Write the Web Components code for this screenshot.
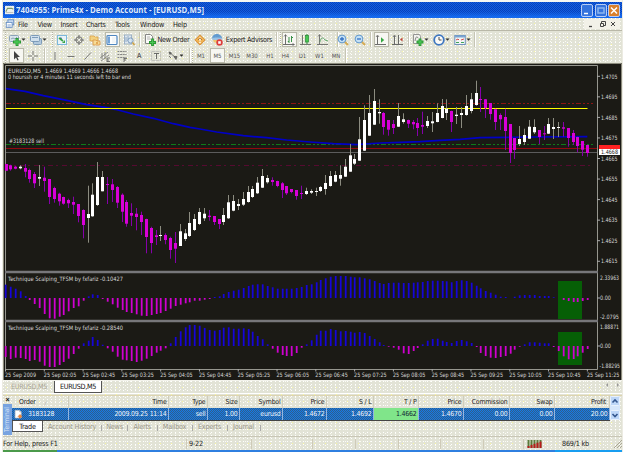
<!DOCTYPE html>
<html lang="en">
<head>
<meta charset="utf-8">
<title>Prime4x</title>
<style>
html,body{margin:0;height:100%;background:#fff}
body{font:7.2px "DejaVu Sans Condensed","DejaVu Sans",sans-serif;font-stretch:condensed;letter-spacing:-.2px;color:#222;overflow:hidden}
</style>
</head>
<body>
<trade-app></trade-app>
<script>
const DITHER = `conic-gradient(at 1px 1px,transparent 75%,#fff 0) 0 0/4px 3px,conic-gradient(at 1px 1px,transparent 75%,#fbfbf4 0) 2px 1px/5px 4px,conic-gradient(at 1px 1px,transparent 75%,#f8f6a0 0) 3px 2px/11px 7px,#e2e3d6`;
const define = (name, render) => customElements.define(name, class extends HTMLElement {
  constructor() { super(); this.attachShadow({mode: 'open'}); }
  connectedCallback() { this.shadowRoot.innerHTML = render(this); }
});

const ICONS = {
  app: '<rect x="0" y="1" width="11" height="10" fill="#eef1ee"/><path d="M1 8 3 4h5l2 1" fill="none" stroke="#7a9a6a" stroke-width="1.3"/><path d="M1 9h9" stroke="#bbb"/>',
  mdi: '<rect x="3.5" y="1" width="7" height="6" fill="#cfe0f5" stroke="#5b86c0"/><rect x="1.5" y="4" width="7" height="6" fill="#fff" stroke="#5b86c0"/><path d="M3 7h4M3 8.500h4" stroke="#5b86c0" stroke-width=".7"/>',
  newchart: '<rect x=".5" y="1.5" width="9" height="6" rx="1" fill="#d6e3ee" stroke="#7b97b3"/><path d="M2 5l2-1 2 1 2-2" fill="none" stroke="#7b97b3"/><path d="M8 4v8M4 8h8" stroke="#0b8a17" stroke-width="3"/><path d="M8 5v6M5 8h6" stroke="#2cc43a" stroke-width="1.3"/>',
  profiles: '<rect x="3.500" y="4.500" width="8" height="6" rx="1" fill="#a9c4de" stroke="#6c8fb5"/><rect x=".5" y="1.500" width="9" height="6" rx="1" fill="#cfe0f0" stroke="#6c8fb5"/><path d="M2 3.500h6" stroke="#6c8fb5"/>',
  market: '<rect x="1.500" y="1.500" width="9" height="9" fill="#e9f4fb" stroke="#6ab0dc"/><path d="M3 5l2-2 1 2z" fill="#23a"/><path d="M3 4l4 3" stroke="#1a9a2a" stroke-width="1.600"/><path d="M6 9l3-3v3z" fill="#1a9a2a"/>',
  cross: '<circle cx="6" cy="6" r="3.200" fill="none" stroke="#555" stroke-width=".9"/><path d="M6 1v4M6 7v4M1 6h4M7 6h4" stroke="#555"/>',
  folder: '<path d="M1 2h4l1 1h3v4H1z" fill="#f5cf72" stroke="#d9962b" stroke-width=".8"/><path d="M4 6h3l1 1h3v4H4z" fill="#f9d98a" stroke="#d9862b" stroke-width=".8"/><path d="M8 8v2" stroke="#c60"/>',
  navigator: '<rect x="1" y="1.500" width="10" height="9" rx="1" fill="#fff" stroke="#3173b8" stroke-width="1.200"/><rect x="2" y="2.500" width="2" height="7" fill="#5b95d6"/><path d="M6 4h4M6 6h3M6 8h4" stroke="#dde6f0" stroke-width=".8"/>',
  tester: '<rect x="1.500" y="1" width="7" height="9" fill="#dfe8f2" stroke="#90a9c4"/><path d="M3 3v5M5 2v5" stroke="#7f9fc4"/><circle cx="7.500" cy="6.500" r="2.600" fill="#cfe3f7" fill-opacity=".8" stroke="#6d90b8"/><path d="M9.500 8.500l2 2.500" stroke="#c9962b" stroke-width="1.500"/>',
  order: '<path d="M1.500.500h5l2 2v7h-7z" fill="#fff" stroke="#777"/><path d="M3 3h3M3 5h4" stroke="#999" stroke-width=".8"/><path d="M8.500 4.500v7.500M5 8.500h7" stroke="#0b8a17" stroke-width="2.800"/><path d="M8.500 5.500v5.500M6 8.500h5" stroke="#30c23e" stroke-width="1.100"/>',
  diamond: '<path d="M6 .8 11.200 6 6 11.200.8 6z" fill="#f2a93b" stroke="#cf7b17" stroke-width=".9"/><path d="M6 3.500v3.200M6 7.800v1.200" stroke="#fff" stroke-width="1.500"/><path d="M4 6l2-2 2 2" fill="none" stroke="#8a4a00" stroke-width=".7"/>',
  expert: '<circle cx="6" cy="5" r="4" fill="#efc25c"/><path d="M1 5C1 1 4 0 6 0s5 2 5 4L6 5z" fill="#4d8fd0"/><ellipse cx="6" cy="4.800" rx="5.500" ry="1.300" fill="#8fbde8"/><circle cx="8.500" cy="8.500" r="3.200" fill="#d22"/><rect x="7.200" y="7.200" width="2.600" height="2.600" fill="#fff"/>',
  bars: '<path d="M2.500 1v9.500M0 10.500h11" stroke="#444" stroke-width=".9"/><path d="M1 2.500 2.500.500 4 2.500M9.500 9.500l2 1-2 1" fill="none" stroke="#444" stroke-width=".7"/><path d="M6 3v6M8.500 2v6M4.800 7.500H6M8.500 3.500H10" stroke="#18802a"/>',
  candle: '<path d="M2.500 1v9.500M0 10.500h11" stroke="#555" stroke-width=".9"/><path d="M7 0v10" stroke="#0a7a1a"/><rect x="5.500" y="1.500" width="3" height="6.500" fill="#2ac43a" stroke="#0a7a1a" stroke-width=".7"/>',
  line: '<path d="M2.500 1v9.500M0 10.500h11" stroke="#555" stroke-width=".9"/><path d="M1 2.500 2.500.500 4 2.500" fill="none" stroke="#555" stroke-width=".7"/><path d="M3 8c1-5 3-5 5-2l3 1" fill="none" stroke="#2d9140" stroke-width=".8"/>',
  zin: '<path d="M7.500 7.500l3.500 3.500" stroke="#d3a13c" stroke-width="2"/><circle cx="5" cy="5" r="3.900" fill="#bfe0fb" stroke="#4b8ac8"/><path d="M5 3v4M3 5h4" stroke="#175ec0" stroke-width="1.300"/>',
  zout: '<path d="M7.500 7.500l3.500 3.500" stroke="#d3a13c" stroke-width="2"/><circle cx="5" cy="5" r="3.900" fill="#bfe0fb" stroke="#4b8ac8"/><path d="M3 5h4" stroke="#175ec0" stroke-width="1.300"/>',
  scroll: '<path d="M2.500 2v8.500M0 10.500h11" stroke="#555"/><path d="M1 3 2.500 1 4 3" fill="none" stroke="#444" stroke-width=".7"/><path d="M6 3.300l3.200 2.700L6 8.700z" fill="#159a25"/>',
  shift: '<path d="M2.500 2v8.500M0 10.500h11M6.500 1v9" stroke="#555"/><path d="M1 3 2.500 1 4 3" fill="none" stroke="#444" stroke-width=".7"/><path d="M10.500 3.500v4L8 5.500z" fill="#b9281c"/>',
  indic: '<path d="M1.500.500h6l1 2v7h-7z" fill="#f5f5f2" stroke="#888"/><path d="M3 7c1-5 2-5 3-3" fill="none" stroke="#777"/><path d="M8 4.500V12M4.500 8h7" stroke="#0b8a17" stroke-width="2.800"/><path d="M8 5.500V11M5.500 8h5" stroke="#34c742" stroke-width="1.100"/>',
  clock: '<circle cx="6" cy="6" r="4.800" fill="#fff" stroke="#2264bd" stroke-width="1.800"/><path d="M6 3v3h2.500" fill="none" stroke="#333"/>',
  template: '<rect x=".8" y="1.500" width="10.500" height="9" fill="#f4f7fb" stroke="#5a85b8"/><rect x="1" y="1.500" width="10" height="2" fill="#6699d2"/><path d="M2 6l2-1 1 1M7 6l3-1" fill="none" stroke="#c33"/><path d="M2 8.500h3M7 8.500h3" stroke="#294"/>',
  cursor: '<path d="M4 1v8.500l2-2 1.500 3 1.200-.6L7.300 7H10z" fill="#222"/>',
  plus: '<path d="M6 1v4M6 7v4M1 6h4M7 6h4" stroke="#666"/>',
  vline: '<path d="M6 2v8" stroke="#666"/>', hline: '<path d="M2.500 6.500h7" stroke="#666"/>', trend: '<path d="M2.500 9.500l6.500-7" stroke="#666"/>',
  channel: '<path d="M1 8l8-6M2 11l8-6M3 3v6M6 2v7" stroke="#666" stroke-width=".8"/><path d="M8 8h3M8 8v4M8 10h2M8 11.500h3" stroke="#444" stroke-width=".8"/>',
  fibo: '<path d="M1.500 1.500h9M1.500 4.500h9M1.500 7.500h9" stroke="#666" stroke-width=".9" stroke-dasharray="2 .6"/><path d="M8 8v4M8 8.500h3M8 10h2" stroke="#444" stroke-width=".8"/>',
  label: '<rect x="1.500" y="1.500" width="9" height="9" fill="none" stroke="#999" stroke-dasharray="1 1"/><path d="M4 3.500h5M6.500 3.500V9" stroke="#555"/>',
  arrows: '<path d="M2 2l2.500 1L3 4.500zM3 3l5 4" stroke="#444" fill="#444" stroke-width=".8"/><path d="M7 6.500h3L9 9.500zM2 6l2 2" stroke="#444" fill="#555" stroke-width=".8"/>',
  caret: '<path d="M3.800 5h4.400L6 7.400z" fill="#111"/>',
  doc: '<path d="M1.500.500h6l2 2v8h-8z" fill="#fff" stroke="#ccc"/><path d="M7.500.500v2h2" fill="#ddd" stroke="#999" stroke-width=".6"/><path d="M8 6l2.500 2.500L8 11 5.500 8.500z" fill="#f08a35" stroke="#c85a1a" stroke-width=".7"/>'
};
const svg = (n, s = 11) => `<svg width="${s}" height="${s}" viewBox="0 0 12 12">${ICONS[n]}</svg>`;

define('ui-icon', el => `<style>:host{display:flex;flex:none}svg{display:block;overflow:visible}</style>${svg(el.getAttribute('name'), el.getAttribute('size') || 11)}`);

define('win-button', el => `<style>:host{display:flex;width:10px;height:11px;border:1px solid #b9cdf4;border-radius:2px;background:${el.hasAttribute('close') ? '#d9802c' : '#3573dd'};box-sizing:content-box;margin-left:1.500px}svg{display:block}</style>
<svg width="10" height="11" viewBox="0 0 10 11" fill="none" stroke="#fff" stroke-width="1.500">${{min: '<path d="M2 8.500h4"/>', max: '<rect x="2" y="3" width="6" height="5" stroke="#8db7ee"/>', close: '<path d="M2 2.500l6 6M8 2.500l-6 6"/>'}[el.getAttribute('kind')]}</svg>`);

define('title-bar', () => `<style>
:host{display:flex;height:16px;align-items:center;padding:0 2px;
background:linear-gradient(#1462de22,#0d5ae000 25%,#1165ea00 60%,#1569ee 92%),conic-gradient(#0a3fb8 25%,#0f5fe2 0 50%,#0a3fb8 0 75%,#0f5fe2 0) 0 0/2px 2px}
.t{flex:1;height:14px;margin-left:1px}
text{font:bold 8.600px "Open Sans","Noto Sans",sans-serif;letter-spacing:0;fill:#dfeafb}</style>
<ui-icon name="app" size="10"></ui-icon><svg class="t"><text x="0" y="10" textLength="188" lengthAdjust="spacingAndGlyphs">7404955: Prime4x - Demo Account - [EURUSD,M5]</text></svg>
<win-button kind="min"></win-button><win-button kind="max"></win-button><win-button kind="close" close></win-button>`);

define('menu-bar', () => `<style>
:host{display:flex;height:12px;align-items:center;padding:0 2px}
span{width:var(--w);white-space:nowrap;letter-spacing:-.25px}span:first-of-type{margin-left:3px}
i{flex:1}.w{display:flex;background:#f2f1e8;gap:5px;padding:1px 3px}</style>
<ui-icon name="mdi" size="10"></ui-icon>
${[['File', 19.5], ['View', 23], ['Insert', 25.5], ['Charts', 29], ['Tools', 25], ['Window', 33], ['Help', 20]].map(([t, w]) => `<span style="--w:${w}px">${t}</span>`).join('')}
<i></i><div class="w"><svg width="30" height="8" fill="none" stroke="#444"><path d="M2 6.500h3" stroke-width="1.300"/><path d="M13.500 3.500h3v3h-3zM14.500 3v-1.500h4v4H17M24 2l4 4M28 2l-4 4"/></svg></div>`);

/* items: [kind, centre, width, text] laid end to end, the gap coming from the centres */
define('tool-bar', el => {
  let end = 3;
  const out = el.items.map(([k, c, w, t]) => {
    const m = c - w / 2 - end; end = c + w / 2;
    const pressed = k.startsWith('*'), n = k.replace('*', '');
    const inner = n === 'sep' ? '' : n === 'grip' ? '' : n === 'text' ? `<span style="${t[1] || ''}">${t[0]}</span>` : svg(n, n === 'caret' ? 11 : 12);
    return `<div class="${n} ${pressed ? 'on' : ''}" style="margin-left:${m}px;width:${w}px">${inner}</div>`;
  }).join('');
  return `<style>:host{display:flex;align-items:center;height:var(--h);box-sizing:border-box;overflow:hidden}
  div{display:flex;flex:none;justify-content:center;align-items:center;height:15px}
  svg{flex:none;overflow:visible;opacity:.85}
  .on{background:#f7f7f2;outline:1px solid #b9b9aa;outline-offset:-1px}
  .sep{background:#c6c5b5;box-shadow:1px 0 #fff}
  .grip{background:repeating-linear-gradient(#b4b3a2 0 1px,#fff 1px 2px)}
  span{white-space:nowrap}</style>${out}`;
});
const tf = (t, c, on) => [(on ? '*' : '') + 'text', c, on ? 15 : 14, [t, 'font-size:6px;color:#555;letter-spacing:0']];
const Bar = customElements.get('tool-bar');
Object.defineProperty(Bar.prototype, 'items', {get() { return this.getAttribute('rows') === 'standard' ? [
  ['grip', 5, 1], ['newchart', 15, 12], ['caret', 23.5, 4], ['profiles', 36, 12], ['caret', 44.500, 4], ['grip', 52.500, 1],
  ['market', 61.500, 12], ['cross', 78.500, 12], ['folder', 95, 12], ['*navigator', 112, 15], ['tester', 129, 12], ['sep', 139.500, 1],
  ['order', 150, 12], ['text', 173.500, 32, ['New Order', 'letter-spacing:-.3px']], ['diamond', 200, 12], ['expert', 217, 12],
  ['text', 249, 47, ['Expert Advisors', 'letter-spacing:-.28px']], ['sep', 276, 1], ['grip', 280, 1], ['*bars', 289, 15], ['candle', 306, 12], ['line', 322.500, 12], ['sep', 337, 1],
  ['zin', 343, 11], ['zout', 359.500, 12], ['sep', 370.500, 1], ['*scroll', 381, 15], ['shift', 398, 12], ['sep', 408, 1],
  ['indic', 418, 12], ['caret', 426, 4], ['clock', 439, 12], ['caret', 447, 4], ['template', 460, 12], ['caret', 468.500, 4], ['sep', 474, 1]
] : [
  ['grip', 5, 1], ['*cursor', 16, 15], ['plus', 33, 12], ['sep', 44, 1], ['vline', 54.500, 12], ['hline', 71, 12], ['trend', 88, 12],
  ['channel', 105, 12], ['fibo', 122, 12], ['text', 139, 12, ['A', 'font:bold 6.800px Liberation Sans,sans-serif;color:#666']], ['label', 156, 12], ['arrows', 172.500, 12], ['caret', 181, 4], ['sep', 189, 1], ['grip', 192.500, 1],
  tf('M1', 201), tf('M5', 217.500, 1), tf('M15', 234.500), tf('M30', 252), tf('H1', 270), tf('H4', 285.500), tf('D1', 302.500), tf('W1', 319.500), tf('MN', 336), ['sep', 345.500, 1]
]; }});

/* Price rows: wick top, body top, body bottom, wick bottom in thirds of a pixel; a leading "w" marks a rising candle */
const CANDLES = `312,312,332,332 314,316,328,332 318,320,326,328 w316,320,325,328 312,324,335,352 326,330,357,368 336,342,370,384 w315,351,356,378 320,353,363,395 357,357,411,432 380,384,417,428 398,401,424,437 410,411,431,434 416,420,430,444 410,426,434,462 432,432,468,487 448,450,495,535 w377,462,474,548 w370,404,469,470 w306,351,435,438 w333,351,394,394 351,372,375,432 357,373,390,426 378,381,428,444 400,404,455,486 420,426,491,500 430,459,467,498 444,461,471,511 455,465,486,525 476,477,531,580 500,504,549,580 510,526,531,555 w498,525,528,543 520,525,540,553 530,534,570,596 516,549,566,609 w492,514,558,558 w507,520,537,543 w456,489,528,531 w462,477,510,513 w444,456,492,495 w444,461,475,483 450,467,471,482 468,468,486,495 477,477,492,507 w444,465,486,495 w405,427,475,477 w405,423,452,454 w417,432,438,450 w396,417,434,438 w378,396,426,428 w378,387,411,414 w351,368,400,402 w327,348,383,384 w345,354,367,371 352,360,366,377 362,363,378,382 366,370,390,414 378,378,400,405 387,387,396,400 390,390,408,419 377,399,402,417 w383,393,402,405 w388,393,398,402 w383,393,395,408 w378,381,393,396 w345,369,387,404 w333,348,378,380 w333,345,365,367 w316,345,356,377 w297,320,350,351 w252,286,335,335 w282,297,311,315 w171,238,302,303 w136,180,272,273 w105,159,227,228 w87,123,194,195 w118,156,160,191 156,159,201,224 180,180,209,227 180,192,204,222 w129,168,200,201 w160,178,186,191 179,180,191,204 180,186,193,208 174,189,204,228 155,195,200,222 w168,183,198,204 w156,184,190,216 w130,159,186,187 w117,138,174,175 w118,146,159,180 152,153,186,216 w141,164,168,192 w141,159,165,204 w105,138,165,167 w99,118,153,160 w62,99,135,137 81,117,120,156 117,118,144,174 129,129,162,179 146,148,186,210 160,165,178,210 146,171,213,270 192,192,279,309 234,234,270,297 w198,237,252,258 w206,225,246,255 w180,200,236,237 w178,201,217,222 210,210,231,252 198,220,223,240 w174,192,221,222 w174,201,207,237 w186,201,204,231 186,202,206,230 204,204,234,260 210,219,246,255 230,231,258,277 243,243,269,288 254,255,279,290`.split(' ');
const OSC1 = [59,65,71,79,93,105,117,129,147,160,161,155,150,139,129,124,107,94,88,90,102,110,118,128,135,141,144,148,152,153,150,147,144,138,131,123,119,115,112,107,107,104,102,96,94,87,81,77,74,69,63,59,58,58,63,67,71,71,71,71,69,66,60,58,52,45,40,35,33,33,33,35,37,37,40,43,48,54,57,54,53,53,54,54,53,52,51,48,47,47,48,49,52,48,46,48,53,62,70,78,83,89,95,96,99,95,91,90,90,90,93,93,93,97,99,105,108,111,111,108,105];
const OSC2 = [276,282,278,279,282,288,285,290,302,306,306,300,291,281,267,251,235,227,216,225,239,250,260,275,284,286,288,291,287,281,273,263,257,250,235,216,199,187,180,180,182,189,195,197,195,188,187,191,191,190,192,200,213,223,238,251,263,270,273,273,264,248,238,226,209,197,197,192,195,199,198,200,203,201,204,213,222,232,240,245,248,254,265,267,258,249,238,227,222,221,227,231,234,228,225,229,234,246,264,273,278,279,276,273,266,254,245,238,232,232,233,235,235,246,258,274,283,282,274,263,252];

define('price-chart', () => {
  const X = i => Math.floor(10.5 + 4.85 * (i - 1)) + .5;
  const candles = CANDLES.map((s, i) => {
    const w = s[0] === 'w', [a, b, c, d] = s.replace('w', '').split(',').map(v => 60 + v / 3), x = Math.max(X(i), 6.5);
    return `<path d="M${x} ${a.toFixed(1)}V${d.toFixed(1)}" stroke="${w ? '#8c8c80' : '#8600aa'}"/><path d="M${x} ${b.toFixed(1)}V${Math.max(c, b + 1).toFixed(1)}" stroke="${w ? '#fff' : '#d800d8'}" stroke-width="3"/>`;
  }).join('');
  const hist = (vals, zero) => vals.map((v, i) => Math.abs(v - zero) < 1 ? '' : `<path d="M${X(i) + .2} ${265 + zero / 3}V${(265 + v / 3).toFixed(1)}" stroke="${v < zero ? '#1605d8' : '#d000d0'}" stroke-width="1.800"/>`).join('');
  const dates = ['2009', '02:05', '02:45', '03:25', '04:05', '04:45', '05:25', '06:05', '06:45', '07:25', '08:05', '08:45', '09:25', '10:05', '10:45', '11:25'];
  const T = (x, y, t, w, f = '#d8d8d8') => `<text x="${x}" y="${y}" textLength="${w}" lengthAdjust="spacingAndGlyphs" fill="${f}">${t}</text>`;
  const ma = [[18,86],[75,94],[130,107],[200,121],[260,134],[320,143],[345,148],[400,162],[460,175],[520,191],[570,202],[600,207],[650,216],[730,227],[800,233],[860,240],[930,246],[1000,251],[1070,254],[1140,249],[1200,247],[1260,245],[1320,241],[1380,238],[1440,233],[1520,232],[1600,231],[1762,230]].map(([x, y]) => [(x / 3).toFixed(1), (60 + y / 3).toFixed(1)]).join(' ');
  return `<style>:host{display:block;height:318px}svg{display:block}text{font:6px "DejaVu Sans Condensed","DejaVu Sans",sans-serif;font-stretch:condensed;letter-spacing:0}</style>
<svg width="619" height="318" viewBox="3 63 619 318" fill="none">
<rect x="3" y="63" width="619" height="318" fill="#1b1a15"/>
<path d="M3.500 380V63.500H621.500V380" stroke="#8b8a7c"/><path d="M3 380.500h619" stroke="#f3f3ec"/>
<g stroke="#96968e"><path d="M5.500 369V65.500H597.500V369.500H5.500"/></g>
<path d="M5 272H598M5 321H598" stroke="#77777a" stroke-width="2.400"/>
<path d="M6 103.500H593" stroke="#8c1414" stroke-dasharray="5 2 2 2 2 2"/>
<path d="M6 144.500H593" stroke="#0f7a1a" stroke-dasharray="5 2 2 2 2 2"/>
<path d="M6 165.500H593" stroke="#560a30" stroke-dasharray="5 3 2 4"/>
<path d="M6 148.500H597" stroke="#900a10"/><path d="M6 152.500H597" stroke="#5c5c5c"/>
<polyline points="${ma}" stroke="#0000c6" stroke-width="1.700"/>
<path d="M6 108.500H587.500" stroke="#ffff00" stroke-width="1.200"/>
${candles}
<path d="M558 281H582V319H558zM558 332H582V365H558z" fill="#065f06"/>
${hist(OSC1, 99)}${hist(OSC2, 243)}
${T(8, 73, 'EURUSD,M5', 33)}${T(45, 73, '1.4669 1.4669 1.4666 1.4668', 73)}${T(8, 79.300, '0 hourssh or 4 minutes 11 seconds left to bar end', 123)}
${T(9, 143.300, '#3183128 sell', 35)}
${T(8, 281.300, 'Technique Scalping_TFSM by fxfariz -0.10427', 115)}${T(8, 330.300, 'Technique Scalping_TFSM by fxfariz -0.28540', 115)}
${Array.from({length: 10}, (_, i) => { const y = 76.300 + i * 20.55; return `<path d="M597 ${y}h3" stroke="#aaa"/>` + T(601, y + 2.200, '1.' + (4705 - i * 10), 16.500); }).join('')}
<rect x="599" y="145" width="21" height="4" fill="#f22"/><rect x="599" y="149" width="21" height="6" fill="#fff"/>
${T(601, 154.300, '1.4668', 17, '#222')}
${T(600, 279.500, '2.33963', 19)}${T(600, 300.300, '0.00', 11)}${T(600, 319, '-2.0795', 19)}${T(600, 328.800, '1.88871', 19)}${T(600, 348.200, '0.00', 11)}${T(599.500, 367.500, '-1.88295', 20.500)}
<path d="M597 298h3M597 346h3" stroke="#aaa"/>
${dates.map((d, i) => { const x = 5.500 + i * 38.79; return `<path d="M${x} 369v2.500" stroke="#aaa"/>` + T((x - .5).toFixed(1), 376.800, '25 Sep ' + d, i ? 32.500 : 31); }).join('')}
</svg>`;
});

define('chart-tabs', () => `<style>:host{display:flex;height:13px;align-items:flex-start;padding-left:1px;border-bottom:1px solid #fff;box-sizing:border-box}
div{height:12px;line-height:11px;box-sizing:border-box;text-align:center;letter-spacing:-.3px}
.a{width:50px;color:#aaa594}.b{width:48px;background:#fff;border:1px solid #555;border-top:0;color:#111}
i{flex:1}svg{margin:1px 3px}</style><div class="a">EURUSD,M5</div><div class="b">EURUSD,M5</div><i></i>
<svg width="14" height="8" fill="#999"><path d="M3 1v4L1 3zM12 1v4l2-2z"/></svg>`);

const COLS = [['Order', 57, '3183128'], ['Time', 100, '2009.09.25 11:14'], ['Type', 39, 'sell'], ['Size', 32, '1.00'], ['Symbol', 43, 'eurusd'], ['Price', 44, '1.4672'], ['S / L', 47, '1.4692'], ['T / P', 45, '1.4662'], ['Price', 45, '1.4670'], ['Commission', 46, '0.00'], ['Swap', 45, '0.00'], ['Profit', 55, '20.00']];
define('trade-table', () => `<style>:host{display:grid;grid-template-columns:${COLS.map(c => c[1] + 'px').join(' ')};grid-template-rows:12px 12px;border-bottom:1px solid #444;width:598px}
div{display:flex;align-items:center;justify-content:flex-end;padding-right:1.500px;box-sizing:border-box;white-space:nowrap;letter-spacing:-.2px;font-size:6.900px}
div:nth-child(13){padding-right:3px}
.h{border-right:1px solid #cfcdbc}.h:first-of-type{justify-content:flex-start;padding-left:7px}
.r{color:#eef4fb;border-right:1px solid #93b5df;background:conic-gradient(#2e5f8c 25%,#1779e6 0 50%,#2e5f8c 0 75%,#1779e6 0) 0 0/2px 2px}
.o{justify-content:flex-start;padding-left:2px;gap:5px}.g{background:#80e58a;color:#123}em{font-style:normal;color:#aaa;margin-left:9px;font-size:6px}</style>
${COLS.map((c, i) => `<div class="h">${c[0]}${i ? '' : '<em>/</em>'}</div>`).join('')}
${COLS.map((c, i) => `<div class="r ${i ? '' : 'o'} ${i === 7 ? 'g' : ''}">${i ? '' : '<ui-icon name="doc" size="9"></ui-icon>'}${c[2]}</div>`).join('')}`);

define('terminal-panel', () => `<style>:host{display:flex;height:40px;border-top:1px solid #ddd4b0;border-bottom:1px solid #c8c6b6}
aside{width:9px;display:flex;flex-direction:column;align-items:center}
aside b{font:bold 7px/8px "Liberation Sans",sans-serif;color:#111;height:8px}
aside span{writing-mode:vertical-rl;transform:rotate(180deg);background:#78a3e0;color:#d9e6f8;width:9px;height:31px;line-height:9px;text-align:center;font-size:6.600px;letter-spacing:0}
main{width:598px}nav{display:flex;height:13px;align-items:flex-start;color:#9a978a}
nav span{line-height:12px;white-space:nowrap}nav i{width:1px;height:6px;background:#aaa;margin-top:3.500px}
.t{width:31px;height:11px;line-height:11px;background:#fff;border:1px solid #555;border-top:0;box-sizing:border-box;color:#111;text-align:center}
.s{width:10px;height:24px;background:#d6e6fb;display:flex}</style>
<aside><b>×</b><span>Terminal</span></aside>
<main><trade-table></trade-table><nav><span class="t">Trade</span>
${[['Account History', 58], ['News', 25], ['Alerts', 28.5], ['Mailbox', 34], ['Experts', 34], ['Journal', 32]].map(([t, w]) => `<span style="width:${w}px;text-align:center">${t}</span><i></i>`).join('')}</nav></main>
<div class="s"><svg width="10" height="24"><rect x=".5" y=".5" width="9" height="9" rx="1" fill="#bdd6f8" stroke="#e8f1fd"/><rect x=".5" y="14.500" width="9" height="9" rx="1" fill="#bdd6f8" stroke="#e8f1fd"/><path d="M2.500 6.500 5 4l2.500 2.500M2.500 18 5 20.500 7.500 18" fill="none" stroke="#34568e" stroke-width="1.600"/></svg></div>`);

define('status-bar', () => {
  const cuts = [187, 252, 313, 356, 399, 441, 484, 524];
  return `<style>:host{display:flex;height:13px;align-items:center}
div{box-sizing:border-box;height:10px;line-height:10px;border-right:1px solid #cfcbb8;white-space:nowrap}
svg{display:block;flex:none}span{margin-left:16px;flex:1}</style>
${cuts.map((c, i) => `<div style="width:${c - (i ? cuts[i - 1] : 3)}px;${i === 1 ? 'padding-left:2px' : ''}">${i === 0 ? 'For Help, press F1' : i === 1 ? '9-22' : ''}</div>`).join('')}
<svg width="19" height="10" style="padding-left:3px">${Array.from({length: 5}, (_, i) => `<path d="M${1.5 + i * 3} 1v8" stroke="#5a7a3a" stroke-width="2"/><path d="M${1.5 + i * 3} ${7 - i * 1.1}V9" stroke="#b81c1c" stroke-width="2"/>`).join('')}</svg>
<span>869/1 kb</span>
<svg width="9" height="9" stroke="#aaa795"><path d="M1 9l8-8M4 9l5-5M7 9l2-2"/></svg>`;
});

define('trade-app', () => `<style>
:host{display:flex;flex-direction:column;width:619px;height:452px;margin-left:3px;background:${DITHER};box-sizing:border-box;outline:1px solid #ecebe2}
.top{height:2px;background:#f6f6f2;flex:none}
title-bar,menu-bar,tool-bar,price-chart,chart-tabs,terminal-panel,status-bar{flex:none}
menu-bar{border-bottom:1px solid #b9b8a8}
terminal-panel{margin-top:1px}
.task{height:2px;margin-top:auto;flex:none;background:linear-gradient(90deg,#4b9a4b 0 54px,#2f7fe0 54px 552px,#189df0 552px)}</style>
<div class="top"></div><title-bar></title-bar><menu-bar></menu-bar>
<tool-bar rows="standard" style="--h:17px"></tool-bar>
<tool-bar rows="line" style="--h:15px"></tool-bar>
<price-chart></price-chart><chart-tabs></chart-tabs><terminal-panel></terminal-panel><status-bar></status-bar><div class="task"></div>`);
</script>
</body>
</html>
